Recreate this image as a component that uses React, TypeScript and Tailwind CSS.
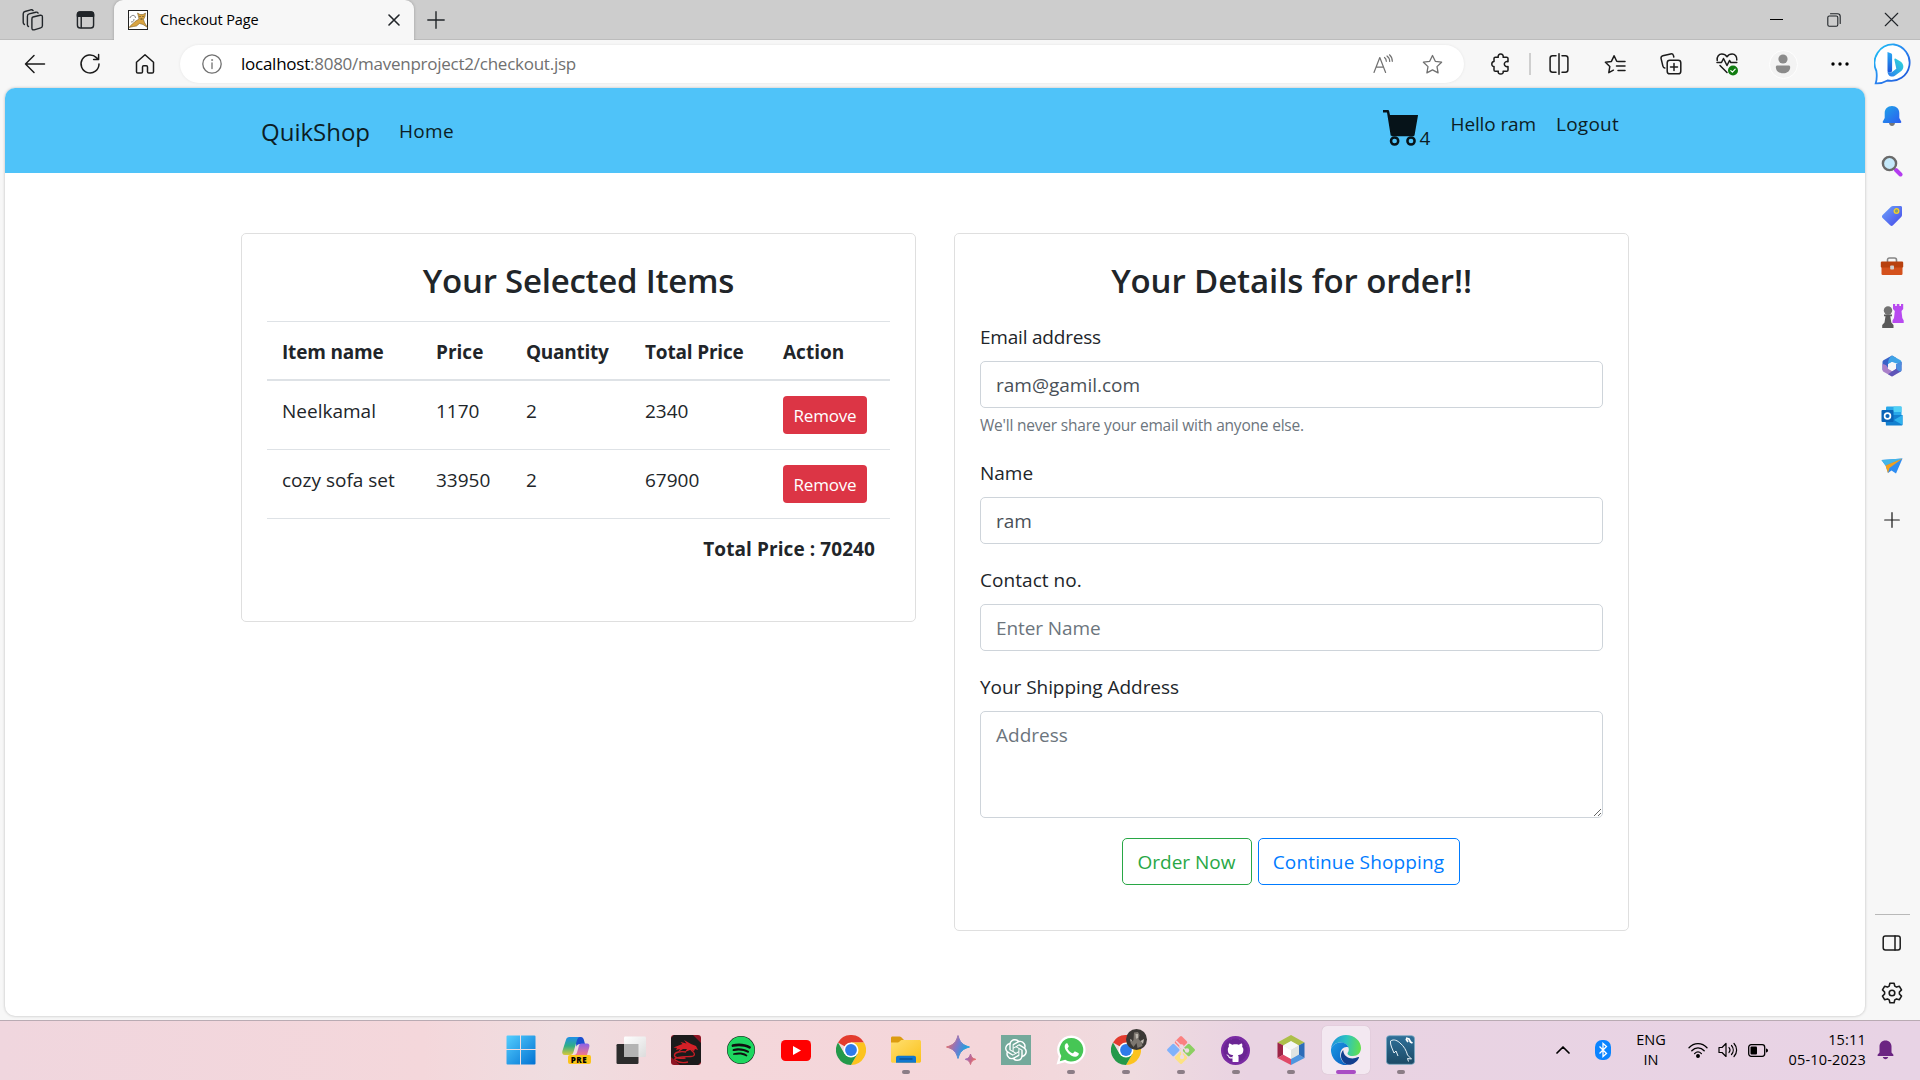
import React from "react";
import { FaGithub, FaSpotify } from "react-icons/fa";
import { SiOpenai } from "react-icons/si";

type Kids = { children: React.ReactNode };

/* ---------- Browser chrome icons ---------- */

const line = { fill: "none", stroke: "currentColor", strokeWidth: 1.5, strokeLinecap: "round" as const, strokeLinejoin: "round" as const };

const Workspaces = () => (
  <svg width="22" height="24" viewBox="0 0 22 24" {...line} strokeWidth={1.4}>
    <path d="M11 9l7.200-1.700c1.400-.3 2.200.3 2.200 1.700v8.700c0 1.200-.6 1.900-1.700 2.200l-6.500 1.900c-1.500.4-2.300-.2-2.300-1.700V11c0-1.200.3-1.800 1.100-2z" />
    <path d="M6.500 18.500c-.8-.3-1.100-.9-1.100-1.800V8.200c0-1.300.6-2 1.800-2.300l6.600-1.700c1.100-.2 1.900.1 2.300.9" />
    <path d="M2.400 16.500c-.8-.3-1.200-.9-1.200-1.900V5.800c0-1.300.7-2 1.800-2.300l5.800-1.700c1.100-.2 1.800 0 2.300.8" />
  </svg>
);
const TabActions = () => (
  <svg width="19" height="20" viewBox="0 0 20 20" {...line}>
    <rect x="1.500" y="1.500" width="17" height="17" rx="3" />
    <path d="M1.500 6V4A2.500 2.500 0 0 1 4 1.500h12A2.500 2.500 0 0 1 18.500 4v2z" fill="currentColor" />
    <path d="M5.500 6v12" />
  </svg>
);
const Favicon = () => (
  <svg width="20" height="20" viewBox="0 0 20 20">
    <rect x=".5" y=".5" width="19" height="19" fill="#fff" stroke="#222" />
    <path d="M1 17.500c2-3 4-3.500 6-6l4-2.500-.8-3.500L9.500 3l2.500 1.500h3L17.500 3 17 6.500l-1.500 3 1 3 3 5-4.500-3-3.500-1-3 2.500-3 .5z" fill="#d9a441" stroke="#6b4f18" strokeWidth=".5" />
    <path d="M2 8c1-3.500 5.500-3.500 5.500 0M3 12c2 0 3-1 3-3" fill="none" stroke="#666" strokeWidth=".8" />
    <path d="M11.500 6.500h1M14.500 6.500h1M12.500 9h2" stroke="#333" strokeWidth=".9" />
  </svg>
);
const Cross = ({ size = 12, width = 1.4 }: { size?: number; width?: number }) => (
  <svg width={size} height={size} viewBox="0 0 12 12" {...line} strokeWidth={width}><path d="M1 1l10 10M11 1L1 11" /></svg>
);
const Plus = ({ size = 18 }: { size?: number }) => (
  <svg width={size} height={size} viewBox="0 0 18 18" {...line} strokeWidth={1.4}><path d="M9 .8v16.400M.8 9h16.400" /></svg>
);
const Back = () => (
  <svg width="22" height="20" viewBox="0 0 22 20" {...line}><path d="M10 1.500L1.500 10l8.500 8.500M1.500 10h19" /></svg>
);
const Reload = () => (
  <svg width="22" height="22" viewBox="0 0 22 22" {...line}><path d="M20 11a9 9 0 1 1-2.600-6.400L19.500 6.500M19.600 1.500v5h-5" /></svg>
);
const Home = () => (
  <svg width="20" height="22" viewBox="0 0 20 22" {...line}><path d="M1.500 9.300L10 1.800l8.500 7.500v9.400c0 .8-.5 1.300-1.300 1.300h-3.400c-.8 0-1.300-.5-1.300-1.300V14c0-.8-.5-1.300-1.200-1.300H8.700c-.7 0-1.200.5-1.200 1.300v4.700c0 .8-.5 1.300-1.300 1.300H2.800c-.8 0-1.300-.5-1.300-1.300z" /></svg>
);
const Info = () => (
  <svg width="20" height="20" viewBox="0 0 20 20" {...line} strokeWidth={1.3}><circle cx="10" cy="10" r="9.200" /><path d="M10 9v5.500" /><circle cx="10" cy="6" r=".6" fill="currentColor" strokeWidth=".6" /></svg>
);
const ReadAloud = () => (
  <svg width="20" height="20" viewBox="0 0 20 20" {...line} strokeWidth={1.2}><path d="M1 18.500L6.800 3.500l5.800 15M3 13.200h7.600M11.500 3.500c1.300 1 1.800 2.200 1.800 3.800M14 2c1.900 1.400 2.700 3 2.700 5.500M16.500.8c2 1.800 2.800 3.700 2.800 6.500" /></svg>
);
const star = "M10.500 1.500l2.800 5.800 6.300.9-4.600 4.400 1.100 6.300-5.600-3-5.600 3L6 12.600 1.400 8.200l6.300-.9z";
const Star = () => <svg width="21" height="21" viewBox="0 0 21 21" {...line} strokeWidth={1.3}><path d={star} /></svg>;
const Extension = () => (
  <svg width="20" height="22" viewBox="0 0 20 22" {...line}><path d="M3 5.500c0-.8.500-1.300 1.300-1.300h3c-.6-1.800.6-3.200 2.400-3.200s3 1.400 2.400 3.200h3.600c.8 0 1.300.5 1.300 1.300v3.200c-2-.6-3.700.6-3.700 2.400s1.700 3 3.700 2.400v3.400c0 .8-.5 1.300-1.300 1.300h-3.600c.6 1.600-.6 2.800-2.400 2.800s-3-1.200-2.400-2.800h-3c-.8 0-1.300-.5-1.300-1.300v-3.300C1.600 13.600.8 12.500.8 11.100S1.600 8.800 3 8.600z" /></svg>
);
const Split = () => (
  <svg width="20" height="22" viewBox="0 0 20 22" {...line}><path d="M7 2.800H3.600c-1.500 0-2.500 1-2.500 2.500v11.400c0 1.500 1 2.500 2.500 2.500H7M13 2.800h3.400c1.500 0 2.500 1 2.500 2.500v11.400c0 1.500-1 2.500-2.500 2.500H13M10 .8v20.400" /></svg>
);
const Favourites = () => (
  <svg width="22" height="21" viewBox="0 0 22 21" {...line}><path d="M14.500 7.500l-1.800-.2-2.600-5.500-2.700 5.600-6 .9 4.400 4.200-1 6.200 4.600-2.500M14.500 7.500h6.500M12.500 12h8.500M14 16.500h7" /></svg>
);
const Collections = () => (
  <svg width="22" height="22" viewBox="0 0 22 22" {...line}><rect x="7.200" y="7.200" width="13.600" height="13.600" rx="2.600" /><path d="M14 10.500v7M10.500 14h7M4.800 15c-1-.2-1.600-.9-1.900-1.900L1.100 5.600c-.3-1.400.3-2.500 1.700-2.900l7.800-1.800c1.400-.3 2.500.4 2.900 1.700l.3 1.400" /></svg>
);
const Health = () => (
  <svg width="22" height="24" viewBox="0 0 22 24" {...line}>
    <path d="M1.200 8.500C.7 4.500 3 2 5.800 2 8 2 9.800 3 11 4.800 12.200 3 14 2 16.200 2c2.800 0 5 2.500 4.600 6M4 13.500l7 7" />
    <path d="M1 10.500h4.500l2-4 3.500 7 2.500-5 1.300 2h6" />
    <circle cx="17" cy="18.500" r="5" fill="#107c10" stroke="none" />
    <path d="M14.800 18.600l1.600 1.600 2.800-3" stroke="#fff" strokeWidth="1.200" />
  </svg>
);
const Avatar = () => (
  <div className="flex size-[29px] items-center justify-center rounded-full border border-white bg-[#f3f3f3]">
    <svg width="16" height="20" viewBox="0 0 16 20" fill="#8b8b8b"><circle cx="8" cy="5" r="4.600" /><path d="M.8 13c0-1 .7-1.600 1.600-1.600h11.200c.9 0 1.600.6 1.600 1.600 0 4-3 6.300-7.200 6.300S.8 17 .8 13z" /></svg>
  </div>
);
const Dots = () => <svg width="18" height="4" viewBox="0 0 18 4"><circle cx="2" cy="2" r="1.700" /><circle cx="9" cy="2" r="1.700" /><circle cx="16" cy="2" r="1.700" /></svg>;
const Bing = () => (
  <svg width="40" height="42" viewBox="0 0 40 42">
    <defs>
      <linearGradient id="bingRing" x1="0" y1="0" x2="1" y2="1"><stop offset="0" stopColor="#19c5f5" /><stop offset=".5" stopColor="#2b84f0" /><stop offset="1" stopColor="#1a4fd6" /></linearGradient>
      <linearGradient id="bingB" x1="0" y1="0" x2="0" y2="1"><stop offset="0" stopColor="#2aa9f5" /><stop offset="1" stopColor="#1c54d8" /></linearGradient>
      <linearGradient id="bingC" x1="0" y1="1" x2="1" y2="0"><stop offset="0" stopColor="#2b7bf0" /><stop offset="1" stopColor="#2fdcd8" /></linearGradient>
    </defs>
    <path d="M20 1.500a18.300 18.300 0 1 1-6.500 36c-3.500 2-7.500 3.200-11.800 2.900 1.300-4 1.300-8 .7-12.400A18.500 18.500 0 0 1 20 1.500z" fill="#fff" stroke="url(#bingRing)" strokeWidth="1.800" />
    <path d="M13.500 9l3.300 1.300c.9.400 1.300 1 1.300 1.900V27.500c-.2 3-4.600 3-4.600 0z" fill="url(#bingB)" />
    <path d="M20.300 16.300c.1-.8.800-1 1.500-.6l4.700 2.700c3.600 2.400 3.800 7 .8 9.500l-6.800 5c-2.800 1.800-7 .2-7-4.700 1.200 1.800 3.200 1.800 4.600.8l4.200-3.200z" fill="url(#bingC)" />
  </svg>
);

/* ---------- Sidebar icons ---------- */

const Bell = () => (
  <svg width="20" height="22" viewBox="0 0 20 22">
    <defs><linearGradient id="bell" x1="0" y1="0" x2="1" y2="1"><stop offset="0" stopColor="#1fa5e8" /><stop offset="1" stopColor="#2c5cf0" /></linearGradient></defs>
    <path d="M7 18h6c-.3 1.800-1.500 3-3 3s-2.700-1.200-3-3z" fill="#777" />
    <path d="M10 1c4.500 0 7.300 3 7.300 7v5l1.900 3.600c.3.700 0 1.400-.8 1.400H1.600c-.8 0-1.100-.7-.8-1.400L2.700 13V8c0-4 2.800-7 7.300-7z" fill="url(#bell)" />
  </svg>
);
const Search = () => (
  <svg width="22" height="22" viewBox="0 0 22 22">
    <path d="M15 15l4.500 4.500" stroke="#b43cf0" strokeWidth="4" strokeLinecap="round" />
    <circle cx="8.500" cy="8.500" r="6.600" fill="#c5e9fa" stroke="#6a6a6a" strokeWidth="2.400" />
  </svg>
);
const Tag = () => (
  <svg width="22" height="22" viewBox="0 0 22 22">
    <defs><linearGradient id="tag" x1="0" y1="0" x2="1" y2="1"><stop offset="0" stopColor="#6ea6fb" /><stop offset="1" stopColor="#4546e8" /></linearGradient></defs>
    <path d="M12 1h7.500c1 0 1.500.6 1.500 1.500V10c0 .8-.2 1.300-.8 1.900L12 20.300c-.9.9-1.900.9-2.800 0L1.600 13c-.9-.9-.9-2 0-2.900L10 1.800c.6-.6 1.200-.8 2-.8z" fill="url(#tag)" />
    <circle cx="15.500" cy="6" r="2.300" fill="#8aa36b" stroke="#f6cf2b" strokeWidth="1.300" />
  </svg>
);
const Toolbox = () => (
  <svg width="24" height="20" viewBox="0 0 24 20">
    <path d="M7.500 6V4c0-1.300.7-2 2-2h5c1.300 0 2 .7 2 2v2" fill="none" stroke="#858585" strokeWidth="1.600" />
    <rect x="1.500" y="10" width="21" height="9" rx="1.200" fill="#d4511c" />
    <rect x=".8" y="5.500" width="22.400" height="6" rx="1.200" fill="#b8410f" />
    <rect x="10.200" y="9.500" width="3.800" height="4" rx=".8" fill="#cfcfcf" />
  </svg>
);
const Chess = () => (
  <svg width="23" height="26" viewBox="0 0 23 26">
    <path d="M12 1h2.200v2h1.600V1h2.600v2H20V1h2.200v5l-1.700 2 .8 7 1.400 2.500V20H11.500v-2.500L13 15l.8-7L12 6z" fill="#b84af0" />
    <circle cx="7" cy="7.500" r="4.200" fill="#727272" /><path d="M3 11.500h8v1.800H9.300l1 6.200 2.200 2.500v3H1.200v-3l2.300-2.500 1-6.200H3z" fill="#595959" />
  </svg>
);
const M365 = () => (
  <svg width="22" height="22" viewBox="0 0 22 22">
    <path d="M11 .5L2.500 5.300c-.7.400-1 .9-1 1.700v8L7 12.500V9.200l8-6.400z" fill="#3a62c8" />
    <path d="M11 .5l8.500 4.800c.7.400 1 .9 1 1.700v3l-9.500-3L7 9.200C7 5 8.500 2 11 .5z" fill="#3fa3e6" />
    <path d="M1.500 9c3 .3 5 1.800 5.500 4.500l4 2.300 3.500 3.700-3.500 2-8.500-4.800c-.7-.4-1-.9-1-1.700z" fill="#a97fc9" />
    <path d="M11 21.500l8.500-4.800c.7-.4 1-.9 1-1.700V7L15 9.500v4l-8 5.700z" fill="#5f55b8" />
    <path d="M20.500 7v8c0 .8-.3 1.300-1 1.700C16 16 15 13.500 15 11V9.200z" fill="#4c8ee0" />
    <path d="M11 7l4 2.300v4.400L11 16l-4-2.300V9.300z" fill="#f7f7f7" />
  </svg>
);
const Outlook = () => (
  <svg width="22" height="22" viewBox="0 0 22 22">
    <rect x="5" y="1.500" width="15.500" height="11" rx="1" fill="#28a8ea" /><path d="M12.500 1.500h8v5.500h-8z" fill="#50d0f5" />
    <path d="M4 10h17.500v9.500c0 .6-.4 1-1 1H5z" fill="#1380d0" /><path d="M21.500 10v10L13 15z" fill="#2fb2ee" />
    <rect x=".5" y="5" width="12" height="12" rx="1" fill="#0a64b8" />
    <circle cx="6.500" cy="11" r="2.900" fill="none" stroke="#fff" strokeWidth="1.700" />
  </svg>
);
const Send = () => (
  <svg width="22" height="16" viewBox="0 0 22 16">
    <path d="M.5 2L21.500.5 15 15.500l-4.500-3L7 15 4.800 8z" fill="#2f8df2" /><path d="M.5 2L21.500.5 4.500 7.500z" fill="#45b6e8" />
    <path d="M21.500.5L8.500 10 7 15.200 4.500 7.500z" fill="#f0a020" />
  </svg>
);
const Panel = () => (
  <svg width="20" height="16" viewBox="0 0 20 16" {...line}><rect x="1.200" y="1" width="17" height="14" rx="2.200" /><path d="M13 1v14" /></svg>
);
const Gear = () => (
  <svg width="22" height="22" viewBox="0 0 22 22" {...line} strokeWidth={1.6}>
    <path d="M8.900 1.200h4.200l.7 2.900 1.700 1 2.900-.8 2.100 3.600-2.100 2.100v2l2.100 2.100-2.100 3.600-2.900-.8-1.700 1-.7 2.900H8.900l-.7-2.900-1.700-1-2.900.8-2.100-3.600L3.600 12v-2L1.500 7.900l2.100-3.600 2.900.8 1.700-1z" /><circle cx="11" cy="11" r="2.800" />
  </svg>
);

/* ---------- Taskbar icons ---------- */

const Windows = () => (
  <svg width="30" height="30" viewBox="0 0 30 30">
    <defs><linearGradient id="win" gradientUnits="userSpaceOnUse" x1="0" y1="0" x2="30" y2="30"><stop offset="0" stopColor="#56d0ff" /><stop offset="1" stopColor="#0070d2" /></linearGradient></defs>
    <path d="M.5 1.500a1 1 0 0 1 1-1H14V14H.5zM15 .5h13.500a1 1 0 0 1 1 1V14H15zM.5 15H14v14.500H1.500a1 1 0 0 1-1-1zM15 15h14.500v13.500a1 1 0 0 1-1 1H15z" fill="url(#win)" />
  </svg>
);
const Copilot = () => (
  <div className="relative h-7 w-[30px]">
    <svg width="30" height="28" viewBox="0 0 30 28">
      <defs>
        <linearGradient id="cpA" x1="0" y1="0" x2="0" y2="1"><stop offset="0" stopColor="#1f8fe8" /><stop offset=".5" stopColor="#2fae86" /><stop offset="1" stopColor="#d8c83a" /></linearGradient>
        <linearGradient id="cpB" x1="0" y1="0" x2="0" y2="1"><stop offset="0" stopColor="#8b62e8" /><stop offset="1" stopColor="#f2788a" /></linearGradient>
      </defs>
      <path d="M14 1h6c1.500 0 2.300 1 2.700 2.300L24 8h-5c-2 0-3 1-3.500 2.700z" fill="#1b4fd0" />
      <path d="M8.500 1H19c-1.600.3-2.500 1.400-3 3l-3.500 12c-.5 1.700-1.600 3-3.500 3H4C1.500 19 .8 17 1.400 15L5 3.800C5.500 2 6.600 1 8.500 1z" fill="url(#cpA)" />
      <path d="M20.500 7.500H26c2 0 2.800 1.500 2.300 3.500L26 19H13c1.500 0 2.500-1 3-2.500l2-7c.4-1.300 1.200-2 2.500-2z" fill="url(#cpB)" />
    </svg>
    <span className="absolute top-[19px] left-[7px] h-[9px] w-[23px] rounded-[2px] bg-[#fcc419] text-center text-[8px] leading-[9px] font-extrabold tracking-[0.5px]">PRE</span>
  </div>
);
const TaskView = () => (
  <svg width="30" height="28" viewBox="0 0 30 28">
    <defs><linearGradient id="tv" x1="0" y1="0" x2="1" y2="1"><stop offset="0" stopColor="#fff" /><stop offset="1" stopColor="#dcdcdc" /></linearGradient></defs>
    <rect x=".5" y="8" width="22" height="20" rx="1.200" fill="#2c2c2c" /><rect x="8" y=".5" width="22" height="20.500" rx="1.200" fill="url(#tv)" />
    <path d="M8 8h14.500v13H9.200A1.200 1.200 0 0 1 8 19.800z" fill="#b3b3b3" />
  </svg>
);
const Dragon = () => (
  <svg width="30" height="30" viewBox="0 0 30 30">
    <rect width="30" height="30" rx="3" fill="#8f1524" /><path d="M3 0h19l8 8v19l-3 3H9l-9-8V3z" fill="#1b1b1b" />
    <path d="M2.500 12.500l9-3.500-2-2 6 1.500L13 5l7 4 5 2 2 4-3-1-1 2-4-1-5 2 2-3-4 0-5 3 2-3-4 1 1-2z" fill="#d42027" />
    <path d="M20 15c4 3 5 6 0 6.500-6 .5-12-1-17 3M15 17c-5-1-11 0-11.500 3s6 4 11 3M4 25c4 3 9 3 13 2" fill="none" stroke="#c91f26" strokeWidth="1.400" />
  </svg>
);
const Spotify = () => (
  <div className="flex size-7 items-center justify-center rounded-full bg-[#101010]"><FaSpotify size={28} color="#1ed760" /></div>
);
const YouTube = () => (
  <svg width="30" height="21" viewBox="0 0 30 21"><rect width="30" height="21" rx="4.500" fill="#f00" /><path d="M12 6l8 4.500-8 4.500z" fill="#fff" /></svg>
);
const Chrome = () => (
  <svg width="30" height="30" viewBox="0 0 30 30">
    <path d="M15 15L2 7.500A15 15 0 0 1 28 7.500H15z" fill="#e33b2e" />
    <path d="M15 7.500h13A15 15 0 0 1 15 30l6.500-11.300z" fill="#fcc31e" />
    <path d="M2 7.500A15 15 0 0 0 15 30l6.500-11.300L8.500 18.700z" fill="#24994a" />
    <circle cx="15" cy="15" r="7.500" fill="#fff" /><circle cx="15" cy="15" r="5.900" fill="#2f7bea" />
  </svg>
);
const Explorer = () => (
  <svg width="30" height="28" viewBox="0 0 30 28">
    <defs><linearGradient id="fold" x1="0" y1="0" x2="1" y2="1"><stop offset="0" stopColor="#ffdf70" /><stop offset="1" stopColor="#fbc119" /></linearGradient></defs>
    <path d="M0 2C0 1 .6.5 1.500.5h7c.8 0 1.300.3 1.800.8L13 4v6H0z" fill="#dc9c10" />
    <path d="M10.500 4H28c1.300 0 2 .6 2 1.800V25c0 1.200-.7 1.800-1.900 1.800H1.900C.7 26.800 0 26.200 0 25V6.500h7c1.500 0 2.300-2.500 3.500-2.500z" fill="url(#fold)" />
    <path d="M5 26.800V22c0-1.500.8-2.300 2.200-2.300h15.600c1.400 0 2.200.8 2.200 2.300v4.800z" fill="#1077cf" /><path d="M8.500 23h13" stroke="#0b4a86" strokeWidth="1.200" />
  </svg>
);
const Sparkle = () => (
  <svg width="30" height="30" viewBox="0 0 30 30">
    <defs>
      <linearGradient id="sp" x1="0" y1=".3" x2="1" y2=".7"><stop offset="0" stopColor="#ee6a5f" /><stop offset=".45" stopColor="#7c78cc" /><stop offset=".8" stopColor="#259fdc" /></linearGradient>
      <linearGradient id="sp2" x1="0" y1=".3" x2="1" y2=".7"><stop offset="0" stopColor="#9269c4" /><stop offset="1" stopColor="#f0685a" /></linearGradient>
    </defs>
    <path d="M12 .5c2 7 4.500 9.500 11.500 11.500C16.500 14 14 16.500 12 23.500 10 16.500 7.500 14 .5 12 7.500 10 10 7.500 12 .5z" fill="url(#sp)" stroke="url(#sp)" />
    <path d="M24.500 19c.9 3.300 2 4.400 5.200 5.300-3.200.9-4.300 2-5.200 5.200-.9-3.200-2-4.300-5.200-5.200 3.200-.9 4.300-2 5.200-5.300z" fill="url(#sp2)" stroke="url(#sp2)" />
  </svg>
);
const ChatGpt = () => <div className="flex size-[30px] items-center justify-center bg-[#74a99b]"><SiOpenai size={22} color="#fff" /></div>;
const WhatsApp = () => (
  <svg width="30" height="30" viewBox="0 0 30 30">
    <path d="M15.500.5a14.200 14.200 0 1 1-6.700 26.800L.5 29.500l2.300-7.900A14.300 14.300 0 0 1 15.500.5z" fill="#fff" />
    <path d="M15.500 3a11.800 11.800 0 1 1-6.300 21.800L3.800 26.200l1.500-5.200A11.800 11.800 0 0 1 15.500 3z" fill="#46c655" />
    <path d="M10.700 8.300c-.9.200-2 1.400-2 3.200 0 4.300 5.800 10.200 10.500 10.200 2 0 3.500-1.300 3.600-2.600.1-.7 0-1-.5-1.200l-3-1.400c-.4-.2-.7-.1-1 .3l-1 1.300c-.3.3-.5.3-.9.200-2.200-1-3.800-2.600-4.800-4.600-.2-.4 0-.6.2-.8l.8-1.100c.2-.3.2-.6 0-1l-1.100-2.200c-.2-.4-.5-.4-.8-.3z" fill="#fff" />
  </svg>
);
const ChromeProfile = () => (
  <div className="relative">
    <Chrome />
    <svg className="absolute -top-[6px] left-[15px]" width="21" height="21" viewBox="0 0 21 21">
      <circle cx="10.500" cy="10.500" r="10.500" fill="#3c3936" /><path d="M8 3.500l4-.5 1.500 3-1 4 3 3 1 4-5 2-1-5-3 4-3-4 3-3z" fill="#7d7770" /><path d="M9.500 5h2.500v4l-2 .8zM4 10l2 1-1 3zM14.500 12l3.500-2-1 5z" fill="#bdb7af" />
    </svg>
  </div>
);
const Git = () => (
  <svg width="30" height="30" viewBox="0 0 30 30">
    <g transform="rotate(45 15 15)">
      <rect x="4.700" y="4.700" width="9.700" height="9.700" rx="1.500" fill="#fb8080" /><rect x="15.600" y="4.700" width="9.700" height="9.700" rx="1.500" fill="#8ccf62" />
      <rect x="4.700" y="15.600" width="9.700" height="9.700" rx="1.500" fill="#80b2fb" /><rect x="15.600" y="15.600" width="9.700" height="9.700" rx="1.500" fill="#fce283" />
    </g>
    <path d="M10 6l6 6v10M16 12l5 4" fill="none" stroke="#eedae4" strokeWidth="1.600" /><g fill="#eedae4"><circle cx="15.500" cy="11.500" r="2.200" /><circle cx="21" cy="15.500" r="2.200" /><circle cx="16" cy="22" r="2.200" /></g>
  </svg>
);
const GitHub = () => (
  <div className="flex size-[29px] items-center justify-center rounded-full border-[3px] border-[#7a2ba3] bg-white"><FaGithub size={25} color="#6b2594" className="shrink-0" /></div>
);
const NetBeans = () => (
  <svg width="28" height="30" viewBox="0 0 28 30">
    <path d="M14 0l13.500 7.500-6 3L14 6.500 6.500 10.500l-6-3z" fill="#adbf4a" /><path d="M.5 7.500l6 3v9l-6 3.500z" fill="#9c2447" />
    <path d="M.5 23l6-3.500 7.500 4V30z" fill="#e04a68" /><path d="M27.500 23l-6-3.500-7.500 4V30z" fill="#4f97e0" /><path d="M27.500 7.500l-6 3v9l6 3.500z" fill="#2d6cb8" />
    <path d="M14 6l8 4.500-8 4.500-8-4.500z" fill="#f6f8f6" /><path d="M6 10.500l8 4.500v9l-8-4.500z" fill="#fff" /><path d="M22 10.500L14 15v9l8-4.500z" fill="#dfe4e2" />
  </svg>
);
const Edge = () => (
  <svg width="30" height="30" viewBox="0 0 30 30">
    <defs>
      <linearGradient id="edA" x1="0" y1=".3" x2="1" y2=".4"><stop offset="0" stopColor="#2090dc" /><stop offset=".5" stopColor="#2cc4c0" /><stop offset="1" stopColor="#62e04e" /></linearGradient>
      <linearGradient id="edB" x1="0" y1="0" x2="1" y2="1"><stop offset="0" stopColor="#1b9ae4" /><stop offset="1" stopColor="#0a5cc0" /></linearGradient>
    </defs>
    <path d="M0 14C.6 6 7 0 15 0c8.500 0 15 6 15 13 0 5-3.500 8-8 8-3.500 0-5.500-1.200-5.500-2.600 0-1 1.300-1.500 1.300-4C17.800 10.500 14 7.500 9.500 7.500 5 7.500 1.500 10 0 14z" fill="url(#edA)" />
    <path d="M0 14c1.500-4 5-6.500 9.500-6.500 4 0 7 2 8 5-4-1.500-8.300 1.500-8.300 7.500 0 4.500 3.300 9 8.300 9.800A15 15 0 0 1 0 14z" fill="url(#edB)" />
    <path d="M12.200 15c-4.300 4.500-2.200 13 5.300 14.800 4 .3 8.500-2.500 10.500-7 .2-.7-.3-1-.9-.7-6 3-14.500 1-14.900-7.100z" fill="#12408f" />
  </svg>
);
const MySql = () => (
  <svg width="29" height="30" viewBox="0 0 29 30">
    <defs><linearGradient id="my" x1="0" y1="0" x2="0" y2="1"><stop offset="0" stopColor="#2f7099" /><stop offset="1" stopColor="#1c4a66" /></linearGradient></defs>
    <rect x=".5" y=".7" width="28" height="28.600" rx="3" fill="url(#my)" stroke="#79a9c4" strokeWidth=".8" />
    <path d="M8 18c-1.500-4-4-8-3.500-12C8 3.500 12 6 14 8c4 3 6.500 8 7.500 12l4 4-4-.5 1 3M8 18l2-2 2 5" fill="none" stroke="#e8f1f6" strokeWidth="1" />
    <path d="M20 3l3 1 1.500 3 2 1M22 7l-2-3" stroke="#fff" strokeWidth="1.700" fill="none" />
  </svg>
);

const taskbarApps: { name: string; icon: React.ReactNode; open?: boolean; active?: boolean }[] = [
  { name: "Start", icon: <Windows /> },
  { name: "Copilot", icon: <Copilot /> },
  { name: "Task View", icon: <TaskView /> },
  { name: "Dragon Center", icon: <Dragon /> },
  { name: "Spotify", icon: <Spotify /> },
  { name: "YouTube", icon: <YouTube /> },
  { name: "Chrome", icon: <Chrome /> },
  { name: "File Explorer", icon: <Explorer />, open: true },
  { name: "Bard", icon: <Sparkle /> },
  { name: "ChatGPT", icon: <ChatGpt /> },
  { name: "WhatsApp", icon: <WhatsApp />, open: true },
  { name: "Chrome profile", icon: <ChromeProfile />, open: true },
  { name: "Git", icon: <Git />, open: true },
  { name: "GitHub Desktop", icon: <GitHub />, open: true },
  { name: "NetBeans", icon: <NetBeans />, open: true },
  { name: "Edge", icon: <Edge />, active: true },
  { name: "MySQL Workbench", icon: <MySql />, open: true },
];

/* ---------- Browser ---------- */

function TitleBar() {
  return (
    <header className="flex h-10 shrink-0 items-stretch border-b border-[#bcbcbc] bg-[#cdcdcd]">
      <div className="flex w-[59px] items-center justify-center pl-[6px]"><Workspaces /></div>
      <div className="flex w-[52px] items-center justify-center"><TabActions /></div>
      <div className="-mb-px ml-[3px] flex w-[300px] items-center rounded-t-[9px] bg-[#f7f7f7] pl-[14px] shadow-[0_0_3px_rgba(0,0,0,0.25)] [clip-path:inset(-3px_-3px_0_-3px)]">
        <Favicon />
        <span className="ml-3 flex-1 text-[14.5px] tracking-[-0.12px] text-black">Checkout Page</span>
        <span className="mr-[14px]"><Cross size={12} width={1.6} /></span>
      </div>
      <div className="flex w-[44px] items-center justify-center"><Plus /></div>
      <div className="ml-auto flex">
        <div className="flex w-[57px] items-center justify-center"><span className="h-px w-[13px] bg-black" /></div>
        <div className="flex w-[57px] items-center justify-center">
          <svg width="14" height="14" viewBox="0 0 14 14" {...line} strokeWidth={1.1}><rect x=".8" y="3" width="10" height="10.200" rx="1.500" /><path d="M3.500.8h7c1.800 0 2.700 1 2.700 2.700v7" /></svg>
        </div>
        <div className="flex w-[58px] items-center justify-center"><Cross size={15} width={0.9} /></div>
      </div>
    </header>
  );
}

const ToolCell = ({ children }: Kids) => <div className="flex w-14 items-center justify-center">{children}</div>;
const NavCell = ({ children }: Kids) => <div className="flex w-[55px] items-center justify-center">{children}</div>;

function Toolbar() {
  return (
    <div className="flex h-12 shrink-0 items-center bg-[#f7f7f7] pl-[7px] text-[#1b1b1b]">
      <NavCell><Back /></NavCell>
      <NavCell><Reload /></NavCell>
      <NavCell><Home /></NavCell>
      <div className="ml-2 flex h-[38px] w-[1284px] items-center rounded-full bg-white pr-[7px] pl-[22px] text-[#707070] shadow-[0_0_3px_rgba(0,0,0,0.08)]">
        <Info />
        <span className="ml-[19px] flex-1 text-[17px] tracking-[-0.25px]"><span className="text-black">localhost</span>:8080/mavenproject2/checkout.jsp</span>
        <div className="flex w-[49px] justify-center"><ReadAloud /></div>
        <div className="flex w-[50px] justify-center"><Star /></div>
      </div>
      <div className="ml-2 flex w-[57px] items-center justify-center"><Extension /></div>
      <div className="h-[22px] w-[2px] bg-[#cfcfcf]" />
      <ToolCell><Split /></ToolCell>
      <ToolCell><Favourites /></ToolCell>
      <ToolCell><Collections /></ToolCell>
      <div className="flex w-[55px] items-center justify-center"><Health /></div>
      <div className="flex w-[58px] items-center justify-center"><Avatar /></div>
      <ToolCell><Dots /></ToolCell>
      <div className="flex flex-1 items-center justify-center"><Bing /></div>
    </div>
  );
}

const SideCell = ({ children }: Kids) => <div className="flex h-[50px] shrink-0 items-center justify-center">{children}</div>;

function Sidebar() {
  return (
    <aside className="flex w-[54px] flex-col pt-[3px] pb-[2px]">
      <SideCell><Bell /></SideCell>
      <SideCell><Search /></SideCell>
      <SideCell><Tag /></SideCell>
      <SideCell><Toolbox /></SideCell>
      <SideCell><Chess /></SideCell>
      <SideCell><M365 /></SideCell>
      <SideCell><Outlook /></SideCell>
      <SideCell><Send /></SideCell>
      <div className="mt-1 text-[#1b1b1b]"><SideCell><Plus size={16} /></SideCell></div>
      <div className="mx-auto mt-auto mb-[3px] h-px w-[35px] bg-[#b9b9b9]" />
      <div className="text-[#1b1b1b]"><SideCell><Panel /></SideCell><SideCell><Gear /></SideCell></div>
    </aside>
  );
}

/* ---------- Shop page ---------- */

function ShopNav() {
  return (
    <nav className="flex h-[85px] shrink-0 items-center bg-[#4fc3f9] pr-[246px] pl-[256px] text-[19px] leading-[30px] text-[#0c1d25]">
      <span className="w-[138px] pt-0.5 text-[24px]">QuikShop</span>
      <span className="tracking-[0.32px]">Home</span>
      <div className="ml-auto flex items-start self-start pt-[21px]">
        <svg className="mt-px mr-[2px]" width="35" height="36" viewBox="0 0 35 36" fill="#061319">
          <path d="M0 0h5c.6 0 1 .4 1.100 1l.9 4h28c0 .3 0 .6-.1 1l-3.300 19c-.1.700-.6 1.200-1.400 1.200H9c-.8 0-1.300-.4-1.400-1.200L4 2.500H0z" />
          <circle cx="11.600" cy="31" r="3.600" fill="none" stroke="#061319" strokeWidth="2.500" />
          <circle cx="28" cy="31" r="3.600" fill="none" stroke="#061319" strokeWidth="2.500" />
        </svg>
        <span className="mt-[14px] w-[31px]">4</span>
        <span className="w-[105.5px] tracking-[-0.12px]">Hello ram</span>
        <span className="w-[63px] tracking-[0.25px]">Logout</span>
      </div>
    </nav>
  );
}

const cart = [
  { name: "Neelkamal", price: 1170, quantity: 2, total: 2340 },
  { name: "cozy sofa set", price: 33950, quantity: 2, total: 67900 },
];

function CartCard() {
  return (
    <section className="h-[389px] w-[675px] rounded-[5px] border border-[#dfdfdf] p-[25px]">
      <h3 className="mb-[19px] pt-px text-center text-[33px] leading-[42px] font-semibold tracking-[-0.25px]">Your Selected Items</h3>
      <table className="w-full table-fixed border-separate border-spacing-0 text-left text-[19px] leading-[30px]">
        <thead>
          <tr className="[&>th]:h-[60px] [&>th]:border-t [&>th]:border-b-2 [&>th]:border-[#dee2e6] [&>th]:px-[15px] [&>th]:pt-[3px] [&>th]:font-bold">
            <th className="w-[154px] tracking-[-0.18px]">Item name</th>
            <th className="w-[90px]">Price</th>
            <th className="w-[119px] tracking-[-0.27px]">Quantity</th>
            <th className="w-[138px] tracking-[-0.18px] whitespace-nowrap">Total Price</th>
            <th>Action</th>
          </tr>
        </thead>
        <tbody>
          {cart.map((row) => (
            <tr key={row.name} className="[&>td]:h-[69px] [&>td]:border-b [&>td]:border-[#dee2e6] [&>td]:px-[15px] [&>td]:pt-[15px] [&>td]:pb-0 [&>td]:align-top">
              <td className="whitespace-nowrap">{row.name}</td>
              <td>{row.price}</td>
              <td>{row.quantity}</td>
              <td>{row.total}</td>
              <td><button className="block h-[38px] w-[84px] rounded-[4px] bg-[#dc3545] pt-px text-[17px] leading-[37px] tracking-[-0.2px] text-white">Remove</button></td>
            </tr>
          ))}
          <tr><td colSpan={5} className="px-[15px] pt-[15px] text-right font-bold tracking-[0.08px]">Total Price : 70240</td></tr>
        </tbody>
      </table>
    </section>
  );
}

const Label = ({ children }: Kids) => <label className="mb-[9px] block pt-px leading-[30px]">{children}</label>;
const field = "block w-full rounded-[5px] border border-[#ced4da] bg-white px-[15px] text-[#495057] placeholder:text-[#6c757d] placeholder:opacity-100";

function DetailsCard() {
  return (
    <section className="h-[698px] w-[675px] rounded-[5px] border border-[#dfdfdf] p-[25px] text-[19px]">
      <h3 className="mb-[19px] pt-px text-center text-[33px] leading-[42px] font-semibold tracking-[-0.1px]">Your Details for order!!</h3>
      <div className="mb-5">
        <div className="tracking-[-0.21px]"><Label>Email address</Label></div>
        <input className={`${field} h-[47px]`} defaultValue="ram@gamil.com" />
        <small className="mt-[5px] block text-[15.5px] leading-6 tracking-[-0.21px] text-[#6c757d]">We'll never share your email with anyone else.</small>
      </div>
      <div className="mb-5">
        <Label>Name</Label>
        <input className={`${field} h-[47px]`} defaultValue="ram" />
      </div>
      <div className="mb-5">
        <div className="tracking-[0.05px]"><Label>Contact no.</Label></div>
        <input className={`${field} h-[47px] tracking-[-0.09px]`} placeholder="Enter Name" />
      </div>
      <div className="mb-5">
        <div className="tracking-[-0.05px]"><Label>Your Shipping Address</Label></div>
        <textarea className={`${field} h-[107px] py-2 leading-[30px]`} placeholder="Address" />
      </div>
      <div className="flex justify-center gap-1.5 pr-0.5">
        <button className="h-[47px] w-[130px] rounded-[5px] border border-[#28a745] pt-[2px] text-[#28a745]">Order Now</button>
        <button className="h-[47px] w-[202px] rounded-[5px] border border-[#007bff] pt-[2px] tracking-[0.15px] text-[#007bff]">Continue Shopping</button>
      </div>
    </section>
  );
}

/* ---------- Taskbar ---------- */

function Taskbar() {
  return (
    <footer className="flex h-[60px] shrink-0 items-stretch border-t border-[#b9abb3] bg-[linear-gradient(90deg,#f0d6de_0%,#f4d7db_22%,#efdde0_29%,#f4d7db_36%,#f4d6da_52%,#efdbdf_59%,#e9d3e2_65%,#e8d3e5_100%)] pl-[493px] text-black">
      {taskbarApps.map((app) => (
        <div key={app.name} className="flex w-[55px] items-center justify-center pb-px">
          <div className={app.active ? "relative flex size-12 items-center justify-center rounded-[5px] bg-[#f3e8f1] shadow-[0_0_1px_rgba(0,0,0,0.2)]" : "relative flex size-12 items-center justify-center"}>
            {app.icon}
            {app.open && <span className="absolute bottom-0 left-5 h-1 w-2 rounded-full bg-[#8b7d86]" />}
            {app.active && <span className="absolute bottom-0 left-[14px] h-1 w-5 rounded-full bg-[#a94cc4]" />}
          </div>
        </div>
      ))}
      <div className="ml-auto flex items-center pr-4 pb-px">
        <div className="flex w-10 justify-center"><svg width="14" height="8" viewBox="0 0 14 8" {...line} strokeWidth={1.7}><path d="M1 7l6-6 6 6" /></svg></div>
        <div className="flex w-10 justify-center">
          <svg width="16" height="20" viewBox="0 0 16 20"><rect width="16" height="20" rx="7" fill="#0a84ff" /><path d="M4.500 6.500l7 7L8 16.500v-13l3.500 3-7 7" fill="none" stroke="#fff" strokeWidth="1.300" /></svg>
        </div>
        <div className="mr-1 w-14 text-center text-[14.5px] leading-5">ENG<br />IN</div>
        <div className="flex w-[30px] justify-center">
          <svg width="20" height="16" viewBox="0 0 20 16" {...line} strokeWidth={1.3}><path d="M1 5.800C6 .2 14 .2 19 5.800M3.800 8.800c3.500-3.800 8.900-3.800 12.400 0M6.600 11.600c2-2 4.800-2 6.800 0" /><circle cx="10" cy="14" r="1.300" fill="currentColor" /></svg>
        </div>
        <div className="flex w-[30px] justify-center">
          <svg width="20" height="18" viewBox="0 0 20 18" {...line} strokeWidth={1.2}><path d="M1 6.500h3l4-4v13l-4-4H1zM11 6.500c1.200 1.500 1.200 3.500 0 5M13.500 4.500c2.300 2.600 2.300 6.400 0 9M16 2.500c3.500 3.800 3.500 9.200 0 13" /></svg>
        </div>
        <div className="flex w-[30px] justify-center">
          <svg width="20" height="13" viewBox="0 0 20 13"><rect x=".7" y=".7" width="16" height="11.600" rx="2.500" fill="none" stroke="#000" strokeWidth="1.300" /><rect x="2.500" y="2.500" width="6.500" height="8" rx="1" /><path d="M18 4.500c1.300.3 2 1 2 2s-.7 1.700-2 2z" /></svg>
        </div>
        <div className="w-[93px] text-right text-[14.5px] leading-5 tracking-[0.18px]">15:11<br />05-10-2023</div>
        <div className="flex w-[38px] justify-center"><svg width="17" height="20" viewBox="0 0 17 20" fill="#6b2482"><path d="M8.500.5c3.700 0 6 2.700 6 6v6l1.900 2.300c.4.700.1 1.200-.6 1.200H1.200c-.7 0-1-.5-.6-1.200l1.900-2.300v-6c0-3.300 2.300-6 6-6zM5.800 17h5.400c-.4 1.400-1.400 2.200-2.700 2.200S6.200 18.400 5.800 17z" /></svg></div>
      </div>
    </footer>
  );
}

export default function App() {
  return (
    <div className="flex h-[1080px] w-[1920px] flex-col overflow-hidden bg-[#f7f7f7] font-['Open_Sans','Noto_Sans',sans-serif] text-[#212529]">
      <TitleBar />
      <Toolbar />
      <div className="flex min-h-0 flex-1 pl-[5px]">
        <main className="mb-1 flex w-[1860px] flex-col overflow-hidden rounded-[10px] bg-white shadow-[0_0_3px_rgba(0,0,0,0.25)]">
          <ShopNav />
          <div className="flex items-start gap-[38px] pt-[60px] pl-[236px]">
            <CartCard />
            <DetailsCard />
          </div>
        </main>
        <Sidebar />
      </div>
      <Taskbar />
    </div>
  );
}
